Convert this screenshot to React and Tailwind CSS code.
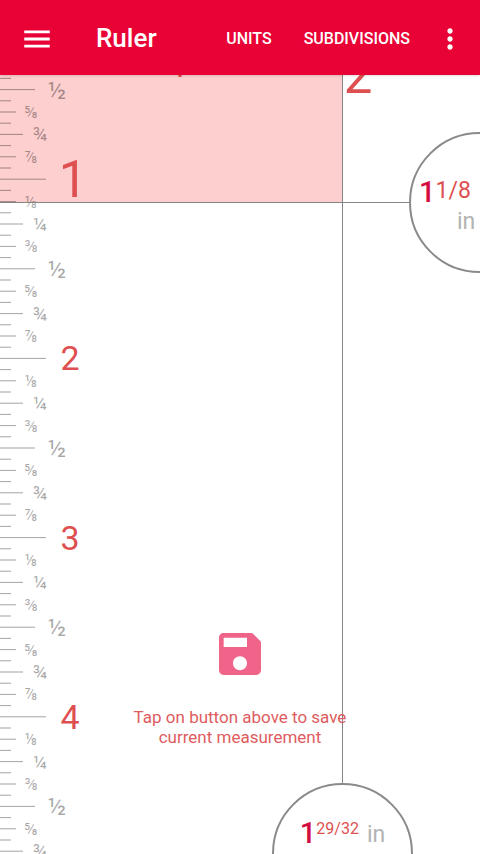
import { MdMenu, MdMoreVert } from "react-icons/md";

const INCH = 179.2;
const EIGHTHS = ["", "⅛", "¼", "⅜", "½", "⅝", "¾", "⅞"];

// tick length and label style for each kind of mark
const MARKS = {
  inch: { length: 46, x: 70, size: 34, drop: 12 },
  half: { length: 35, x: 57, size: 24, drop: 9 },
  quarter: { length: 23, x: 40, size: 19, drop: 7 },
  eighth: { length: 16, x: 31, size: 16, drop: 6 },
  sixteenth: { length: 11 },
};

function markKind(i) {
  if (i % 16 === 0) return "inch";
  if (i % 8 === 0) return "half";
  if (i % 4 === 0) return "quarter";
  if (i % 2 === 0) return "eighth";
  return "sixteenth";
}

function Scale() {
  // the first marks would sit under the header
  const first = 7;
  const last = Math.floor((window.innerHeight * 16) / INCH);
  const marks = Array.from({ length: last - first + 1 }, (_, n) => n + first);
  return (
    <svg className="absolute inset-0 h-full w-full" aria-label="Ruler scale">
      {marks.map((i) => {
        const kind = markKind(i);
        const mark = MARKS[kind];
        const y = (i * INCH) / 16;
        const active = i === 16;
        const label = kind === "inch" ? i / 16 : EIGHTHS[(i % 16) / 2];
        return (
          <g key={i}>
            <line x1="0" x2={mark.length} y1={y} y2={y} stroke="#000" strokeOpacity="0.36" />
            {mark.size && (
              <text
                x={active ? 73 : mark.x}
                y={y + (active ? 18 : mark.drop)}
                fontSize={active ? 51 : mark.size}
                textAnchor="middle"
                fill={kind === "inch" ? "#de5050" : "#000"}
                fillOpacity={kind === "inch" ? 1 : 0.34}
              >
                {label}
              </text>
            )}
          </g>
        );
      })}
      <text x="179" y="77" fontSize="34" textAnchor="middle" fill="#de5050">1</text>
      <text x="358" y="93" fontSize="51" textAnchor="middle" fill="#de5050">2</text>
    </svg>
  );
}

function SaveIcon() {
  return (
    <svg viewBox="0 0 24 24" className="size-14" fill="currentColor" aria-hidden="true">
      <path d="M16.6 3H5c-1.11 0-2 .9-2 2v14c0 1.1.89 2 2 2h14c1.1 0 2-.9 2-2V7.4c0-.5-.2-.9-.5-1.2l-2.7-2.7c-.3-.3-.7-.5-1.2-.5zM12 19c-1.66 0-3-1.34-3-3s1.34-3 3-3 3 1.34 3 3-1.34 3-3 3zm3-10H5V5h10v4z" />
    </svg>
  );
}

function Header() {
  return (
    <header className="relative z-10 flex h-[75px] items-center bg-[#e80235] pt-[2px] pr-[14px] pl-5 text-white shadow-sm">
      <button aria-label="Menu" className="text-[34px]">
        <MdMenu />
      </button>
      <h1 className="ml-[42px] text-[26px] font-medium">Ruler</h1>
      <div className="ml-auto flex items-center text-base font-medium">
        <button>UNITS</button>
        <button className="ml-8">SUBDIVISIONS</button>
        <button aria-label="More options" className="ml-6 text-[32px]">
          <MdMoreVert />
        </button>
      </div>
    </header>
  );
}

export default function App() {
  return (
    <div className="relative flex h-screen flex-col overflow-hidden bg-white font-['Roboto',sans-serif]">
      <div className="absolute inset-0">
        <div className="absolute top-0 left-0 h-[202px] w-[342px] bg-[#fdcfcf]" />
        <Scale />
        <div className="absolute top-[202px] right-[70px] left-0 h-px bg-[#858585]" />
        <div className="absolute top-0 bottom-[70px] left-[342px] w-px bg-[#858585]" />
        <div className="absolute top-[132px] -right-[70px] h-[141px] w-[141px] rounded-full border-2 border-[#8a8a8a] bg-white pt-[42px] pl-[8px]">
          <div className="flex h-[32px] items-start">
            <span className="text-[29px] leading-[32px] font-medium text-[#d30d40]">1</span>
            <span className="text-[23px] leading-[30px] text-[#de5050]">1/8</span>
          </div>
          <div className="pl-[38px] text-[23px] leading-[28px] text-[#b3b3b3]">in</div>
        </div>
        <div className="absolute -bottom-[70px] left-[272px] flex h-[141px] w-[141px] items-start justify-center rounded-full border-2 border-[#8a8a8a] bg-white pt-[32px]">
          <span className="text-[29px] leading-[32px] font-medium text-[#d30d40]">1</span>
          <span className="text-base leading-[24px] text-[#de5050]">29/32</span>
          <span className="ml-2 text-[23px] leading-[36px] text-[#b3b3b3]">in</span>
        </div>
      </div>
      <Header />
      <main className="relative flex flex-1 flex-col items-center justify-end pb-[107px]">
        <button aria-label="Save measurement" className="text-[#f0648a]">
          <SaveIcon />
        </button>
        <p className="mt-[25px] w-[220px] text-center text-[17px] leading-[20px] text-[#de5c60]">
          Tap on button above to save current measurement
        </p>
      </main>
    </div>
  );
}
